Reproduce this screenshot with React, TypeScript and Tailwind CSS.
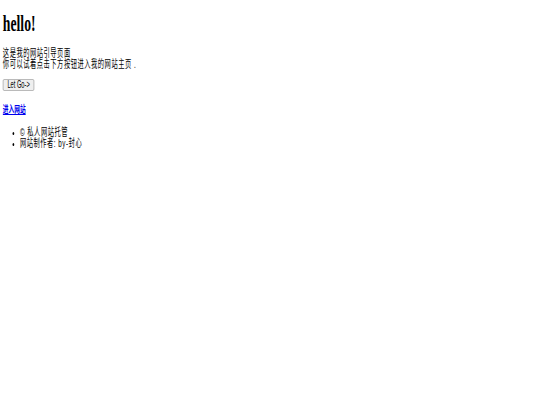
export default function App() {
  return (
    <div className="w-[540px] h-[405px] overflow-hidden bg-white">
      {/* the reference is squeezed sideways, so the page is drawn at full width and scaled on x */}
      <div
        className="origin-top-left scale-x-[0.57] whitespace-nowrap pl-[5px] text-black"
        style={{ fontFamily: '"Liberation Sans", "Noto Sans CJK SC", sans-serif' }}
      >
        <h1
          className="mt-[9px] text-[24px] leading-[28px] font-bold"
          style={{ fontFamily: '"Liberation Serif", "Noto Sans CJK SC", serif' }}
        >
          hello!
        </h1>

        <p className="mt-[11px] text-[11px] leading-[11px] tracking-[0.9px]">
          这是我的网站引导页面
          <br />
          你可以试着点击下方按钮进入我的网站主页 .
        </p>

        <button className="mt-[9px] h-[12px] px-[7px] flex items-center border border-[#a9a9a9] rounded-[2px] bg-[#efefef] text-[10px] leading-[10px]">
          Let Go-&gt;
        </button>

        <h4 className="mt-[13px] text-[10px] leading-[11px] font-bold">
          <a href="#" className="text-[#0000ee] underline">
            进入网站
          </a>
        </h4>

        <ul className="mt-[12px] pl-[30px] list-disc text-[11px] leading-[11px] tracking-[0.9px]">
          <li>© 私人网站托管</li>
          <li>网站制作者: by-封心</li>
        </ul>
      </div>
    </div>
  )
}
